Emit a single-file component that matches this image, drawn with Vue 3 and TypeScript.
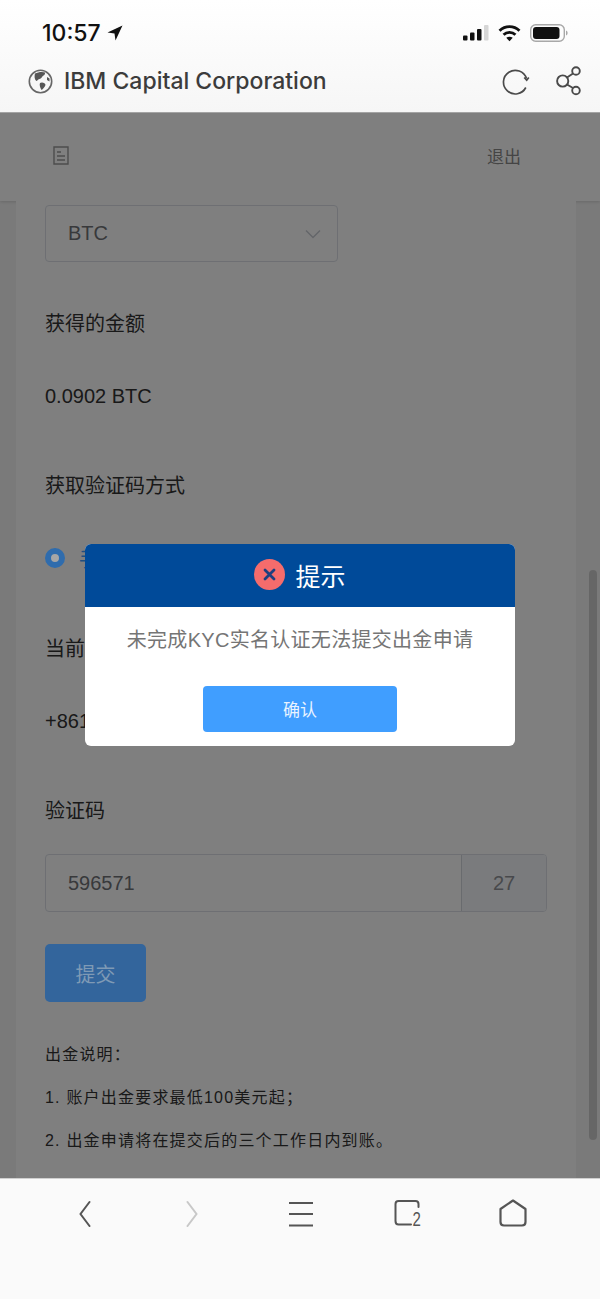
<script setup lang="ts">
const notes: string[] = ['出金说明：', '1. 账户出金要求最低100美元起；', '2. 出金申请将在提交后的三个工作日内到账。']
</script>

<template>
  <div class="screen">
    <header class="chrome">
      <div class="status">
        <div class="clock">
          <span>10:57</span>
          <svg width="16" height="16" viewBox="0 0 16 16"><path d="M15.500 .5 L.5 7.500 L7.500 8.500 L8.500 15.500 Z" fill="#111" /></svg>
        </div>
        <div class="status-icons">
          <svg width="26" height="16" viewBox="0 0 26 16">
            <rect x="0" y="10.500" width="4.500" height="5" rx="1" fill="#111" />
            <rect x="7" y="7.500" width="4.500" height="8" rx="1" fill="#111" />
            <rect x="14" y="4" width="4.500" height="11.500" rx="1" fill="#111" />
            <rect x="21" y="0" width="4.500" height="15.500" rx="1" fill="#d6d6d6" />
          </svg>
          <svg width="23" height="18" viewBox="0 0 24 18" fill="none" stroke="#111" stroke-width="3">
            <path d="M1.600 6.600 C7.600 .9 16.400 .9 22.400 6.600" />
            <path d="M5.800 10.800 C9.200 7.600 14.800 7.600 18.200 10.800" />
            <path d="M12 17.600 L8.600 14 C10.600 12.600 13.400 12.600 15.400 14 Z" fill="#111" stroke="none" />
          </svg>
          <svg width="38" height="18" viewBox="0 0 38 18">
            <rect x=".7" y=".7" width="33.600" height="16.600" rx="5" fill="none" stroke="#a8a8a8" stroke-width="1.400" />
            <rect x="3" y="3" width="26.500" height="12" rx="3" fill="#111" />
            <path d="M36 6.500 C37.200 7 37.600 8 37.600 9 C37.600 10 37.200 11 36 11.500 Z" fill="#a8a8a8" />
          </svg>
        </div>
      </div>
      <div class="browser-bar">
        <svg class="globe" width="25" height="25" viewBox="0 0 25 25">
          <circle cx="12.500" cy="12.500" r="11.200" fill="#f6f6f6" stroke="#666" stroke-width="1.600" />
          <path d="M7 4.500 C10 2.800 15 2.500 17 3.500 C17.500 6 15 6.500 14 8 C13 10.500 10 9.500 9 12 C7 12 6 8 7 4.500 Z" fill="#555" />
          <path d="M12 14 C14 12.500 17.500 14 17.500 16 C16.500 18.500 15 20 13.500 21 C12.500 19 11 16.500 12 14 Z" fill="#555" />
          <path d="M19 8 L21.500 9.500 L21.500 12.500 L19 11 Z" fill="#555" />
        </svg>
        <span class="site">IBM Capital Corporation</span>
        <svg class="reload" width="30" height="28" viewBox="0 0 30 28" fill="none" stroke="#4a4a4a" stroke-width="1.700">
          <path d="M24.800 20.500 A11.800 11.800 0 1 1 25.500 11.500" />
          <path d="M23.200 10.500 L25.700 13.200 L27.800 10.500" />
        </svg>
        <svg width="28" height="32" viewBox="0 0 28 32" fill="none" stroke="#4a4a4a" stroke-width="1.900">
          <circle cx="8.700" cy="16" r="5.600" />
          <circle cx="22" cy="6" r="3.800" />
          <circle cx="22" cy="25.500" r="3.800" />
          <path d="M13 12.500 L19 8.500 M13 19.500 L19 23" />
        </svg>
      </div>
    </header>

    <main class="viewport">
      <div class="topnav">
        <svg width="16" height="19" viewBox="0 0 16 19" fill="none" stroke="#9a9a9a" stroke-width="1.400">
          <path d="M1 1 H15 V18 H1 Z" />
          <path d="M4 6 H8 M4 10 H12 M4 14 H12" />
        </svg>
        <span class="logout">退出</span>
      </div>

      <section class="card">
        <div class="select">
          <span>BTC</span>
          <svg width="16" height="10" viewBox="0 0 16 10" fill="none" stroke="#c8ccd3" stroke-width="1.500"><path d="M1 1.500 L8 8.500 L15 1.500" /></svg>
        </div>
        <div class="label amount-label">获得的金额</div>
        <div class="value amount">0.0902 BTC</div>
        <div class="label method-label">获取验证码方式</div>
        <div class="radio-row">
          <span class="radio"></span>
          <span class="radio-text">手</span>
        </div>
        <div class="label phone-label">当前</div>
        <div class="value phone">+861</div>
        <div class="label code-label">验证码</div>
        <div class="code-input">
          <span class="code">596571</span>
          <span class="addon">27</span>
        </div>
        <button class="submit" type="button">提交</button>
        <div class="notes">
          <p v-for="n in notes" :key="n">{{ n }}</p>
        </div>
      </section>

      <div class="scrollbar"></div>

      <div class="mask">
        <div class="modal">
          <div class="modal-head">
            <svg width="31" height="31" viewBox="0 0 31 31">
              <circle cx="15.500" cy="15.500" r="15.500" fill="#f56c6c" />
              <path d="M11 11 L20 20 M20 11 L11 20" stroke="#1d3f7f" stroke-width="2.800" stroke-linecap="round" />
            </svg>
            <span>提示</span>
          </div>
          <p class="modal-text">未完成KYC实名认证无法提交出金申请</p>
          <button class="confirm" type="button">确认</button>
        </div>
      </div>
    </main>

    <footer class="toolbar">
      <svg width="14" height="28" viewBox="0 0 14 28" fill="none" stroke="#555" stroke-width="2" stroke-linecap="round"><path d="M11.500 3 L2.500 15 L11.500 27" /></svg>
      <svg width="14" height="28" viewBox="0 0 14 28" fill="none" stroke="#c8c8c8" stroke-width="2" stroke-linecap="round"><path d="M2.500 3 L11.500 15 L2.500 27" /></svg>
      <svg width="26" height="28" viewBox="0 0 26 28" fill="none" stroke="#555" stroke-width="2.200"><path d="M1 4 H25 M1 15 H25 M1 26.500 H25" /></svg>
      <div class="tabs">
        <svg width="26" height="27" viewBox="0 0 26 27" fill="none" stroke="#555" stroke-width="2" stroke-linecap="round">
          <path d="M24.500 8 V5 Q24.500 2 21.500 2 H4.500 Q1.500 2 1.500 5 V22 Q1.500 25.500 4.500 25.500 H17" />
        </svg>
        <span class="tab-count">2</span>
      </div>
      <svg width="28" height="28" viewBox="0 0 28 28" fill="none" stroke="#555" stroke-width="2.200" stroke-linejoin="round"><path d="M14 1.500 L26.500 10 V23 Q26.500 26.500 23 26.500 H5 Q1.500 26.500 1.500 23 V10 Z" /></svg>
    </footer>
  </div>
</template>

<style scoped>
.screen {
  width: 600px;
  height: 1299px;
  display: flex;
  flex-direction: column;
  overflow: hidden;
  font-family: "Liberation Sans", "Noto Sans CJK SC", sans-serif;
  color: #333;
}
.chrome {
  height: 113px;
  flex: none;
  box-sizing: border-box;
  border-bottom: 1px solid #a4a4a4;
  background: linear-gradient(#ffffff, #f6f6f6);
  display: flex;
  flex-direction: column;
}
.status {
  height: 50px;
  padding: 16px 32px 0 42px;
  box-sizing: border-box;
  display: flex;
  justify-content: space-between;
  align-items: center;
}
.clock {
  display: flex;
  align-items: center;
  gap: 6px;
  font-family: Inter, sans-serif;
  font-size: 23px;
  font-weight: 500;
  color: #111;
}
.status-icons {
  display: flex;
  align-items: center;
  gap: 9px;
}
.browser-bar {
  flex: 1;
  display: flex;
  align-items: center;
  padding: 0 18px 0 28px;
}
.globe {
  margin-right: 11px;
}
.site {
  flex: 1;
  font-family: Inter, sans-serif;
  font-size: 23px;
  font-weight: 500;
  color: #3c3c3c;
  white-space: nowrap;
}
.reload {
  margin-right: 23px;
}
.viewport {
  flex: 1;
  position: relative;
  overflow: hidden;
  background: #f5f5f5;
}
.topnav {
  height: 88px;
  box-sizing: border-box;
  background: #fff;
  box-shadow: 0 1px 3px rgba(0, 0, 0, 0.15);
  display: flex;
  align-items: center;
  justify-content: space-between;
  padding: 0 79px 3px 53px;
}
.logout {
  font-size: 17px;
  color: #8a8a8a;
}
.card {
  position: relative;
  margin: 0 24px 0 16px;
  background: #fff;
  padding: 4px 29px 0;
  height: 1000px;
}
.select {
  width: 293px;
  height: 57px;
  box-sizing: border-box;
  border: 1px solid #dcdfe6;
  border-radius: 4px;
  padding: 0 16px 0 22px;
  display: flex;
  align-items: center;
  justify-content: space-between;
  font-size: 20px;
  color: #707277;
}
.label,
.value {
  font-size: 20px;
  line-height: 28px;
  color: #333;
}
.amount-label {
  margin-top: 48px;
}
.amount {
  margin-top: 44px;
}
.method-label {
  margin-top: 62px;
}
.radio-row {
  margin-top: 44px;
  display: flex;
  align-items: center;
  height: 28px;
  gap: 14px;
}
.radio {
  position: relative;
  z-index: 3;
  width: 20px;
  height: 20px;
  box-sizing: border-box;
  border-radius: 50%;
  border: 6.500px solid #2f6cad;
  background: #a6a6a6;
}
.radio-text {
  font-size: 20px;
  color: #409eff;
}
.phone-label {
  margin-top: 63px;
}
.phone {
  margin-top: 44px;
}
.code-label {
  margin-top: 62px;
}
.code-input {
  margin-top: 29px;
  width: 502px;
  height: 58px;
  box-sizing: border-box;
  border: 1px solid #dcdfe6;
  border-radius: 4px;
  display: flex;
  align-items: stretch;
  font-size: 20px;
  color: #707277;
  overflow: hidden;
}
.code {
  flex: 1;
  padding-left: 22px;
  display: flex;
  align-items: center;
}
.addon {
  width: 84px;
  border-left: 1px solid #d3d6dc;
  background: #f5f7fa;
  color: #909399;
  display: flex;
  align-items: center;
  justify-content: center;
}
.submit {
  position: relative;
  z-index: 3;
  display: block;
  margin-top: 32px;
  width: 101px;
  height: 58px;
  padding: 0;
  border: 0;
  border-radius: 5px;
  background: #33659c;
  color: #7f9ab5;
  font: inherit;
  font-size: 20px;
}
.notes {
  margin-top: 31px;
  font-size: 16px;
  line-height: 43px;
  letter-spacing: 1.200px;
  color: #333;
}
.notes p {
  margin: 0;
}
.scrollbar {
  position: absolute;
  right: 3px;
  top: 457px;
  width: 8px;
  height: 570px;
  border-radius: 4px;
  background: rgba(0, 0, 0, 0.16);
}
.mask {
  position: absolute;
  inset: 0;
  z-index: 2;
  padding-bottom: 1px;
  background: rgba(0, 0, 0, 0.5);
  display: flex;
  align-items: center;
  justify-content: center;
}
.modal {
  width: 430px;
  height: 202px;
  background: #fff;
  border-radius: 6px;
  overflow: hidden;
  display: flex;
  flex-direction: column;
  align-items: center;
}
.modal-head {
  width: 100%;
  height: 63px;
  flex: none;
  box-sizing: border-box;
  padding-bottom: 2px;
  background: #004a99;
  display: flex;
  align-items: center;
  justify-content: center;
  gap: 10px;
  color: #fff;
  font-size: 25px;
}
.modal-text {
  margin: 19px 0 0;
  font-size: 20px;
  line-height: 28px;
  letter-spacing: 0.300px;
  color: #757575;
}
.confirm {
  margin-top: 32px;
  width: 194px;
  height: 46px;
  padding: 0 0 2px;
  border: 0;
  border-radius: 4px;
  background: #409eff;
  color: #e8f3ff;
  font: inherit;
  font-size: 17px;
}
.toolbar {
  height: 121px;
  flex: none;
  box-sizing: border-box;
  background: #fafafa;
  border-top: 1px solid #d0d0d0;
  display: grid;
  grid-template-columns: 106px 108px 109px 103px 109px;
  padding: 20px 33px 0 32px;
  align-items: start;
  justify-items: center;
}
.tabs {
  position: relative;
  width: 26px;
  height: 27px;
}
.tab-count {
  position: absolute;
  right: -3px;
  bottom: -3px;
  font-size: 20px;
  line-height: 20px;
  color: #555;
  transform: scaleX(0.75);
}
</style>
